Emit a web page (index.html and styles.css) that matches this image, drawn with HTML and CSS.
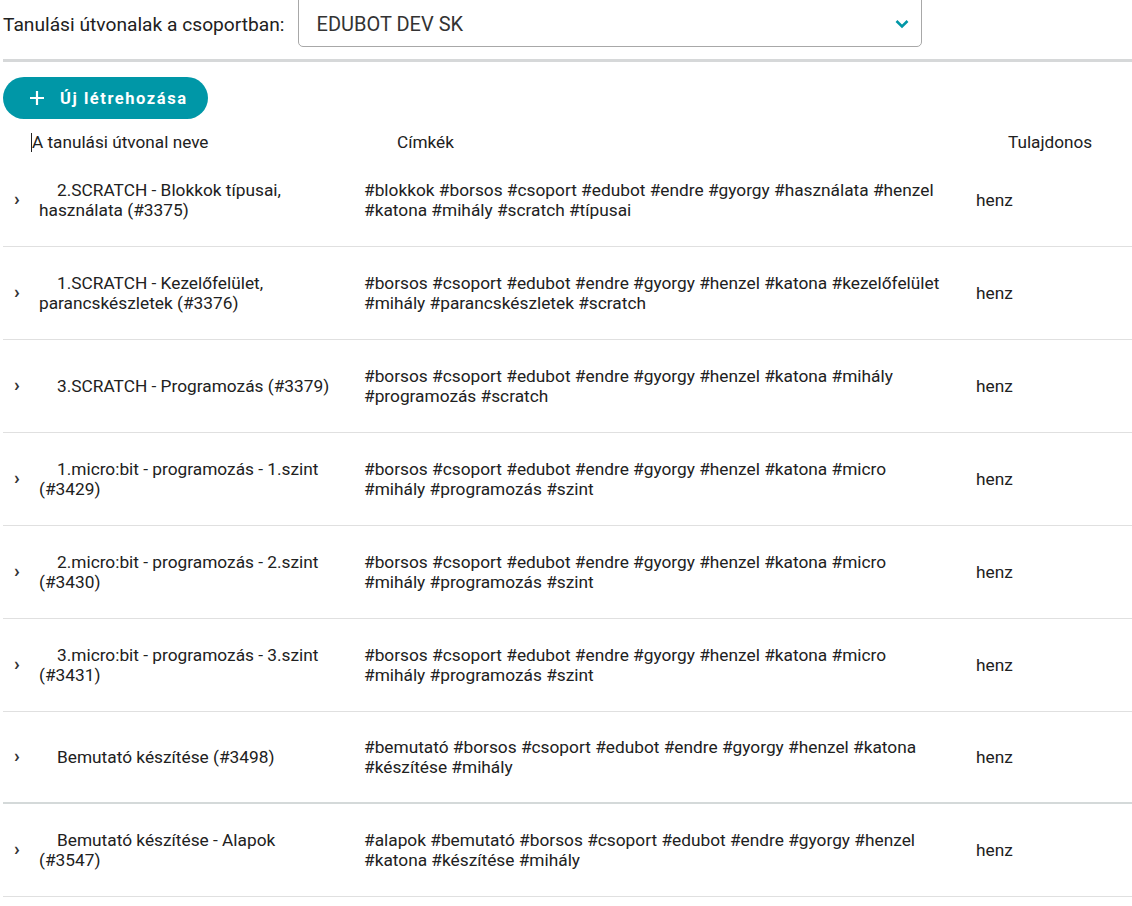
FILE: index.html
```html
<!DOCTYPE html>
<html lang="hu">
<head>
<meta charset="utf-8">
<title>Tanulási útvonalak</title>
<link rel="stylesheet" href="styles.css">
</head>
<body>
<div class="page">
  <div class="group-bar">
    <label class="group-label">Tanulási útvonalak a csoportban:</label>
    <div class="select">
      <span class="select-value">EDUBOT DEV SK</span>
      <svg class="select-chevron" width="14" height="10" viewBox="0 0 14 10"><path d="M1.5 2 L7 7.5 L12.5 2" fill="none" stroke="#0097a7" stroke-width="2.6"/></svg>
    </div>
  </div>
  <div class="divider"></div>
  <button class="create-btn">
    <svg class="plus" width="16" height="16" viewBox="0 0 16 16"><path d="M8 1 V15 M1 8 H15" stroke="#fff" stroke-width="2.2"/></svg>
    <span>Új létrehozása</span>
  </button>

  <div class="table">
    <div class="thead">
      <div class="th th-name"><span class="caret"></span>A tanulási útvonal neve</div>
      <div class="th th-tags">Címkék</div>
      <div class="th th-owner">Tulajdonos</div>
    </div>

    <div class="row">
      <div class="expander">›</div>
      <div class="name">2.SCRATCH - Blokkok típusai, használata (#3375)</div>
      <div class="tags">#blokkok #borsos #csoport #edubot #endre #gyorgy #használata #henzel #katona #mihály #scratch #típusai</div>
      <div class="owner">henz</div>
    </div>
    <div class="row">
      <div class="expander">›</div>
      <div class="name">1.SCRATCH - Kezelőfelület, parancskészletek (#3376)</div>
      <div class="tags">#borsos #csoport #edubot #endre #gyorgy #henzel #katona #kezelőfelület #mihály #parancskészletek #scratch</div>
      <div class="owner">henz</div>
    </div>
    <div class="row">
      <div class="expander">›</div>
      <div class="name">3.SCRATCH - Programozás (#3379)</div>
      <div class="tags">#borsos #csoport #edubot #endre #gyorgy #henzel #katona #mihály #programozás #scratch</div>
      <div class="owner">henz</div>
    </div>
    <div class="row">
      <div class="expander">›</div>
      <div class="name">1.micro:bit - programozás - 1.szint (#3429)</div>
      <div class="tags">#borsos #csoport #edubot #endre #gyorgy #henzel #katona #micro #mihály #programozás #szint</div>
      <div class="owner">henz</div>
    </div>
    <div class="row">
      <div class="expander">›</div>
      <div class="name">2.micro:bit - programozás - 2.szint (#3430)</div>
      <div class="tags">#borsos #csoport #edubot #endre #gyorgy #henzel #katona #micro #mihály #programozás #szint</div>
      <div class="owner">henz</div>
    </div>
    <div class="row">
      <div class="expander">›</div>
      <div class="name">3.micro:bit - programozás - 3.szint (#3431)</div>
      <div class="tags">#borsos #csoport #edubot #endre #gyorgy #henzel #katona #micro #mihály #programozás #szint</div>
      <div class="owner">henz</div>
    </div>
    <div class="row row-strong">
      <div class="expander">›</div>
      <div class="name">Bemutató készítése (#3498)</div>
      <div class="tags">#bemutató #borsos #csoport #edubot #endre #gyorgy #henzel #katona #készítése #mihály</div>
      <div class="owner">henz</div>
    </div>
    <div class="row">
      <div class="expander">›</div>
      <div class="name">Bemutató készítése - Alapok (#3547)</div>
      <div class="tags">#alapok #bemutató #borsos #csoport #edubot #endre #gyorgy #henzel #katona #készítése #mihály</div>
      <div class="owner">henz</div>
    </div>
  </div>
</div>
</body>
</html>
```

FILE: styles.css
```css
* { box-sizing: border-box; }
html, body { margin: 0; padding: 0; background: #fff; }
body {
  font-family: Roboto, "Noto Sans", "Liberation Sans", sans-serif;
  color: #212121;
  font-size: 17.3px;
}
.page { padding-left: 3px; width: 1132px; }

.group-bar {
  display: flex;
  align-items: center;
  height: 48px;
}
.group-label { font-size: 19.2px; color: #212121; margin-right: 13px; }
.select {
  width: 624px;
  height: 52px;
  border: 1px solid #a8a8a8;
  border-radius: 5px;
  display: flex;
  align-items: center;
  justify-content: space-between;
  padding: 0 12px 0 18px;
  margin-top: -6px;
}
.select-value { font-size: 20px; color: #333; margin-top: 6px; }
.select-chevron { display: block; margin-top: 6px; }

.divider {
  height: 3px;
  background: #d6d8d9;
  margin-top: 11px;
}

.create-btn {
  margin-top: 15px;
  height: 42px;
  width: 205px;
  border: none;
  border-radius: 21px;
  background: #0097a7;
  color: #fff;
  display: flex;
  align-items: center;
  padding: 0 0 0 26px;
  font-family: Roboto, sans-serif;
  font-weight: 700;
  font-size: 16.5px;
  letter-spacing: 1.55px;
}
.create-btn .plus { margin-right: 15px; }

.thead {
  display: grid;
  grid-template-columns: 28px 366px 611px 1fr;
  height: 35px;
  padding-top: 11px;
  align-items: center;
}
.th { font-size: 17.2px; color: #212121; }
.th-name { grid-column: 2; display: flex; align-items: center; }
.caret { display: inline-block; width: 1px; height: 19px; background: #222; }
.th-tags { grid-column: 3; }
.th-owner { grid-column: 4; }

.row {
  display: grid;
  grid-template-columns: 36px 325px 612px 1fr;
  align-items: center;
  height: 93px;
  border-bottom: 1px solid #e0e0e0;
}
.row-strong { height: 92px; border-bottom: 2px solid #d4d9d9; }
.expander {
  font-size: 19px;
  color: #333;
  padding-left: 11px;
  font-weight: 700;
  margin-top: -3px;
}
.name {
  line-height: 20px;
  text-indent: 18px;
  padding-right: 33px;
}
.tags {
  line-height: 20px;
  padding-right: 34px;
}
```
